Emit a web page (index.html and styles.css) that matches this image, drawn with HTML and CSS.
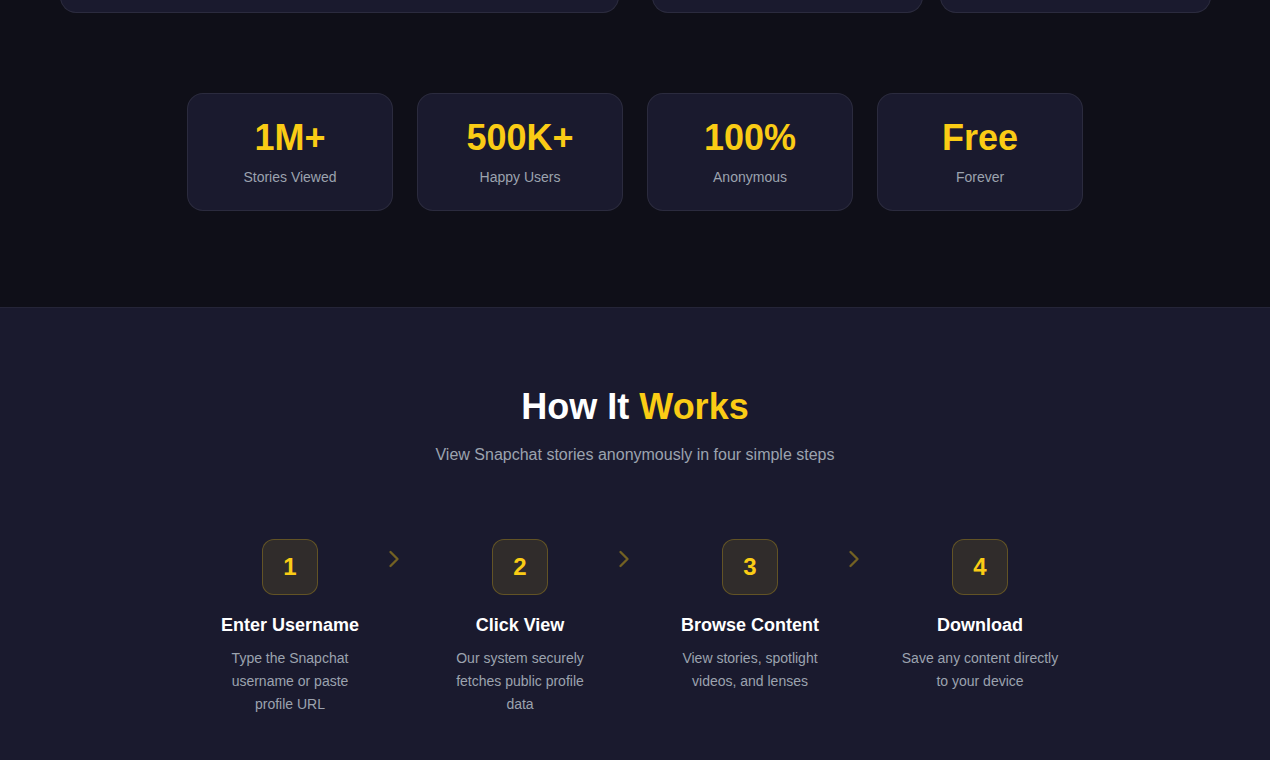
FILE: index.html
```html
<!DOCTYPE html>
<html lang="en">
<head>
<meta charset="utf-8">
<title>Snapchat Story Viewer</title>
<link rel="stylesheet" href="styles.css">
</head>
<body>
<div class="top-strip">
  <div class="top-card top-card-wide"></div>
  <div class="top-card top-card-mid"></div>
  <div class="top-card top-card-right"></div>
</div>

<section class="stats">
  <div class="stats-grid">
    <div class="stat-card">
      <div class="stat-value">1M+</div>
      <div class="stat-label">Stories Viewed</div>
    </div>
    <div class="stat-card">
      <div class="stat-value">500K+</div>
      <div class="stat-label">Happy Users</div>
    </div>
    <div class="stat-card">
      <div class="stat-value">100%</div>
      <div class="stat-label">Anonymous</div>
    </div>
    <div class="stat-card">
      <div class="stat-value">Free</div>
      <div class="stat-label">Forever</div>
    </div>
  </div>
</section>

<section class="how">
  <h2 class="how-title">How It <span class="accent">Works</span></h2>
  <p class="how-sub">View Snapchat stories anonymously in four simple steps</p>
  <div class="steps">
    <div class="step">
      <div class="step-badge">1</div>
      <h3 class="step-title">Enter Username</h3>
      <p class="step-desc">Type the Snapchat username or paste profile URL</p>
      <svg class="step-arrow" viewBox="0 0 24 24" fill="none" stroke="currentColor" stroke-width="2" stroke-linecap="round" stroke-linejoin="round"><path d="m9 18 6-6-6-6"/></svg>
    </div>
    <div class="step">
      <div class="step-badge">2</div>
      <h3 class="step-title">Click View</h3>
      <p class="step-desc">Our system securely fetches public profile data</p>
      <svg class="step-arrow" viewBox="0 0 24 24" fill="none" stroke="currentColor" stroke-width="2" stroke-linecap="round" stroke-linejoin="round"><path d="m9 18 6-6-6-6"/></svg>
    </div>
    <div class="step">
      <div class="step-badge">3</div>
      <h3 class="step-title">Browse Content</h3>
      <p class="step-desc">View stories, spotlight videos, and lenses</p>
      <svg class="step-arrow" viewBox="0 0 24 24" fill="none" stroke="currentColor" stroke-width="2" stroke-linecap="round" stroke-linejoin="round"><path d="m9 18 6-6-6-6"/></svg>
    </div>
    <div class="step">
      <div class="step-badge">4</div>
      <h3 class="step-title">Download</h3>
      <p class="step-desc">Save any content directly to your device</p>
    </div>
  </div>
</section>
</body>
</html>
```

FILE: styles.css
```css
* { box-sizing: border-box; }

html, body {
  margin: 0;
  padding: 0;
  background: #0f0f18;
  font-family: "Liberation Sans", Arial, sans-serif;
  color: #ffffff;
}

.top-strip {
  height: 13px;
  overflow: hidden;
  display: flex;
  align-items: flex-end;
  padding: 0 60px;
}

.top-card {
  height: 80px;
  flex: none;
  background: #1a1a2e;
  border: 1px solid rgba(255, 255, 255, 0.08);
  border-radius: 16px;
}

.top-card-wide { width: 559px; margin-right: 33px; }
.top-card-mid { width: 271px; margin-right: 17px; }
.top-card-right { width: 271px; }

.stats {
  padding: 80px 0 96px;
}

.stats-grid {
  width: 896px;
  margin: 0 auto;
  display: grid;
  grid-template-columns: repeat(4, 1fr);
  gap: 24px;
}

.stat-card {
  background: #1a1a2e;
  border: 1px solid rgba(255, 255, 255, 0.08);
  border-radius: 16px;
  padding: 24px 24px 23px;
  text-align: center;
}

.stat-value {
  font-size: 36px;
  line-height: 40px;
  font-weight: 700;
  color: #facc15;
  margin-bottom: 9px;
}

.stat-label {
  font-size: 14px;
  line-height: 20px;
  color: #9ca3af;
}

.how {
  background: #1a1a2e;
  border-top: 1px solid rgba(255, 255, 255, 0.05);
  padding: 79px 0 60px;
  text-align: center;
}

.how-title {
  margin: 0 0 16px;
  font-size: 36px;
  line-height: 40px;
  font-weight: 700;
  color: #ffffff;
}

.accent { color: #facc15; }

.how-sub {
  margin: 0 0 72px;
  font-size: 16px;
  line-height: 24px;
  color: #9ca3af;
}

.steps {
  width: 896px;
  margin: 0 auto;
  display: grid;
  grid-template-columns: repeat(4, 1fr);
  gap: 24px;
}

.step {
  position: relative;
  padding: 0 24px;
  display: flex;
  flex-direction: column;
  align-items: center;
}

.step-badge {
  width: 56px;
  height: 56px;
  border-radius: 12px;
  background: rgba(250, 204, 21, 0.1);
  border: 1px solid rgba(250, 204, 21, 0.25);
  color: #facc15;
  font-size: 24px;
  font-weight: 700;
  display: flex;
  align-items: center;
  justify-content: center;
  margin-bottom: 16px;
}

.step-title {
  margin: 0 0 8px;
  font-size: 18px;
  line-height: 28px;
  font-weight: 700;
  color: #ffffff;
}

.step-desc {
  margin: 0;
  font-size: 14px;
  line-height: 22.75px;
  color: #9ca3af;
}

.step-arrow {
  position: absolute;
  right: -15px;
  top: 6px;
  width: 28px;
  height: 28px;
  color: rgba(250, 204, 21, 0.4);
}
```
